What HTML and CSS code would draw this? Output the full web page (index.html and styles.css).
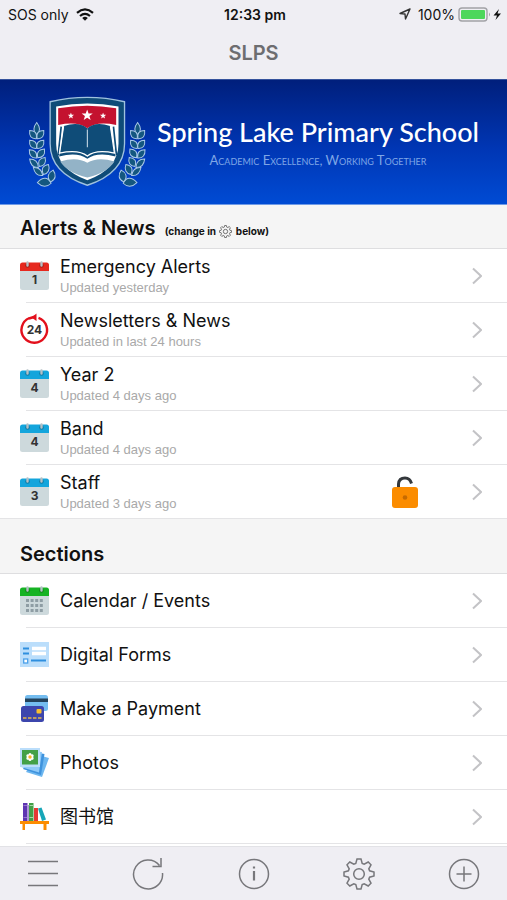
FILE: index.html
```html
<!DOCTYPE html>
<html lang="en">
<head>
  <meta charset="utf-8">
  <meta name="viewport" content="width=device-width, initial-scale=1.0">
  <title>SLPS</title>
  <link rel="stylesheet" href="styles.css">
</head>
<body>
  <!-- shared icons -->
  <svg class="defs" aria-hidden="true">
    <symbol id="cal" viewBox="0 0 29 29">
      <path d="M0 9H29V26.500Q29 29 26.500 29H2.500Q0 29 0 26.500Z" fill="#cdd9dc"/>
      <path d="M2.500 1.500H26.500Q29 1.500 29 4V10H0V4Q0 1.500 2.500 1.500Z" fill="currentColor"/>
      <circle cx="7.500" cy="4.500" r="2.300" fill="#000" opacity=".25"/>
      <circle cx="21.500" cy="4.500" r="2.300" fill="#000" opacity=".25"/>
      <path d="M7.500 1.500V4.500M21.500 1.500V4.500" stroke="#b5c0c6" stroke-width="2.400" stroke-linecap="round"/>
    </symbol>
    <symbol id="gear" viewBox="-16 -16 32 32">
      <path d="M-2 -15H2L3.200 -10.600L5.200 -9.800L9.200 -12L12 -9.200L9.800 -5.200L10.600 -3.200L15 -2V2L10.600 3.200L9.800 5.200L12 9.200L9.200 12L5.200 9.800L3.200 10.600L2 15H-2L-3.200 10.600L-5.200 9.800L-9.200 12L-12 9.200L-9.800 5.200L-10.600 3.200L-15 2V-2L-10.600 -3.200L-9.800 -5.200L-12 -9.200L-9.200 -12L-5.200 -9.800L-3.200 -10.600Z"/>
      <circle r="5.300"/>
    </symbol>
    <symbol id="chevron" viewBox="0 0 10 18">
      <path d="M1 1.500L9 9L1 16.500" fill="none" stroke="#c3c3c6" stroke-width="2"/>
    </symbol>
    <symbol id="star" viewBox="-10 -10 20 20">
      <path d="M0 -10L2.400 -3.200H9.500L3.800 1.200L5.900 8.100L0 4L-5.900 8.100L-3.800 1.200L-9.500 -3.200H-2.400Z" fill="#fff"/>
    </symbol>
    <symbol id="laurel" viewBox="85 60 90 280">
      <g fill="#14577f" stroke="#a9c8e6" stroke-width="3">
        <path d="M111 142Q94 164 111 179Q128 164 111 142Z"/>
        <path d="M110 190C113 172 105 166 90 166C88 182 94 191 110 190Z"/>
        <path d="M112 190C109 172 117 166 132 166C134 182 128 191 112 190Z"/>
        <path d="M110 219C113 201 105 195 90 195C88 211 94 220 110 219Z"/>
        <path d="M112 219C109 201 117 195 132 195C134 211 128 220 112 219Z"/>
        <path d="M111 248C113 230 104 223 89 223C88 239 95 249 111 248Z"/>
        <path d="M114 247C110 229 118 222 134 221C137 237 130 247 114 247Z"/>
        <path d="M116 276C115 258 106 251 90 251C92 267 99 277 116 276Z"/>
        <path d="M119 273C113 255 120 248 136 246C140 261 134 272 119 273Z"/>
        <path d="M129 300C126 282 116 275 101 276C104 291 112 302 129 300Z"/>
        <path d="M131 297C123 279 130 270 146 267C151 282 146 294 131 297Z"/>
        <path d="M154 323C144 304 129 304 113 321C127 335 142 335 154 323Z"/>
        <path d="M153 319C139 304 146 291 160 284C170 298 168 312 153 319Z"/>
      </g>
    </symbol>
  </svg>

  <header class="topbar">
    <div class="status">
      <div class="status-left">
        <span>SOS only</span>
        <svg width="18" height="13" viewBox="0 0 18 13" fill="none" stroke="#111" stroke-width="2.200">
          <path d="M1 4.800Q9 -2 17 4.800M4 8Q9 3.800 14 8"/>
          <path d="M6.200 9.900Q9 7.800 11.800 9.900L9 12.800Z" fill="#111" stroke="none"/>
        </svg>
      </div>
      <span class="time">12:33 pm</span>
      <div class="status-right">
        <svg width="12" height="12" viewBox="0 0 12 12" fill="none" stroke="#333" stroke-width="1.400" stroke-linejoin="round">
          <path d="M11 1L1 5.500L6 6L6.500 11Z"/>
        </svg>
        <span class="percent">100%</span>
        <svg width="44" height="15" viewBox="0 0 44 15">
          <rect x="1" y="1" width="28" height="13" rx="3" fill="#efeef3" stroke="#a2a2a6" stroke-width="1.400"/>
          <rect x="3" y="3" width="24" height="9" rx="1" fill="#4cd75b"/>
          <path d="M31 5.500Q33 7.500 31 9.500Z" fill="#a2a2a6"/>
          <path d="M41 2L35.500 8.500H39L37.500 13L43 6.500H39.500Z" fill="#111"/>
        </svg>
      </div>
    </div>
    <h1 class="title">SLPS</h1>
  </header>

  <section class="banner">
    <svg class="crest" viewBox="85 60 355 280">
      <use href="#laurel" x="85" y="60" width="90" height="280"/>
      <use href="#laurel" x="85" y="60" width="90" height="280" transform="translate(523 0) scale(-1 1)"/>
      <path d="M151 80Q262 54 373 80V205Q373 292 262 329Q151 292 151 205Z" fill="#0f4c78" stroke="#9fc2de" stroke-width="4"/>
      <path d="M169 94Q262 76 355 94V205Q355 279 262 314Q169 279 169 205Z" fill="#fff"/>
      <path d="M175 99Q262 84 348 99V149Q290 137 262 159Q234 137 175 149Z" fill="#c4122f"/>
      <path d="M181 258Q231 243 262 262Q293 243 343 258Q322 291 262 306Q202 291 181 258Z" fill="#93b3c7"/>
      <path d="M192 152Q240 138 262 160Q284 138 330 152L346 243Q291 229 262 250Q233 229 178 243Z" fill="#0f4c78"/>
      <path d="M184 154L175 240M340 154L349 240" stroke="#0f4c78" stroke-width="5"/>
      <path d="M191 153L179 233Q237 221 262 242Q287 221 343 233L331 153" fill="none" stroke="#fff" stroke-width="4"/>
      <path d="M262 163V216" stroke="#d5e4ee" stroke-width="3"/>
      <use href="#star" x="203" y="112" width="20" height="20"/>
      <use href="#star" x="244" y="103" width="35" height="35"/>
      <use href="#star" x="299" y="112" width="20" height="20"/>
    </svg>
    <div class="banner-text">
      <div class="school">Spring Lake Primary School</div>
      <div class="motto">Academic Excellence, Working Together</div>
    </div>
  </section>

  <main>
    <h2 class="heading">Alerts &amp; News
      <small>(change in <svg class="mini-gear" width="13" height="13"><use href="#gear"/></svg> below)</small>
    </h2>
    <ul class="list alerts">
      <li><a class="row" href="#">
        <svg class="icon red" viewBox="0 0 29 29"><use href="#cal"/><text x="14.500" y="23">1</text></svg>
        <span class="label">Emergency Alerts<small>Updated yesterday</small></span>
        <svg class="chevron"><use href="#chevron"/></svg>
      </a></li>
      <li><a class="row" href="#">
        <svg class="icon" viewBox="0 0 29 29">
          <path d="M18.500 2.800A12.800 12.800 0 1 1 9.500 3" fill="none" stroke="#e3101c" stroke-width="2.400"/>
          <path d="M9 3.500L15.500 1.500" stroke="#e3101c" stroke-width="2.400"/>
          <path d="M16.500 -1.500V6L11.500 2.500Z" fill="#e3101c"/>
          <text x="14.500" y="19">24</text>
        </svg>
        <span class="label">Newsletters &amp; News<small>Updated in last 24 hours</small></span>
        <svg class="chevron"><use href="#chevron"/></svg>
      </a></li>
      <li><a class="row" href="#">
        <svg class="icon blue" viewBox="0 0 29 29"><use href="#cal"/><text x="14.500" y="23">4</text></svg>
        <span class="label">Year 2<small>Updated 4 days ago</small></span>
        <svg class="chevron"><use href="#chevron"/></svg>
      </a></li>
      <li><a class="row" href="#">
        <svg class="icon blue" viewBox="0 0 29 29"><use href="#cal"/><text x="14.500" y="23">4</text></svg>
        <span class="label">Band<small>Updated 4 days ago</small></span>
        <svg class="chevron"><use href="#chevron"/></svg>
      </a></li>
      <li><a class="row" href="#">
        <svg class="icon blue" viewBox="0 0 29 29"><use href="#cal"/><text x="14.500" y="23">3</text></svg>
        <span class="label">Staff<small>Updated 3 days ago</small></span>
        <svg class="lock" width="26" height="32" viewBox="0 0 26 32">
          <path d="M6.500 13V8Q7 2 13 2Q18 2 19.500 7.500" fill="none" stroke="#34383c" stroke-width="3"/>
          <rect x="0" y="11" width="26" height="21" rx="3" fill="#fb8c00"/>
          <circle cx="13" cy="21.500" r="2.300" fill="#c66a00"/>
        </svg>
        <svg class="chevron"><use href="#chevron"/></svg>
      </a></li>
    </ul>

    <h2 class="heading sections">Sections</h2>
    <ul class="list">
      <li><a class="row" href="#">
        <svg class="icon green" viewBox="0 0 29 29">
          <use href="#cal"/>
          <path d="M6 14.500H23M6 19.500H23M6 24.500H23" stroke="#8e9da4" stroke-width="3" stroke-dasharray="3 1.600"/>
        </svg>
        <span class="label">Calendar / Events</span>
        <svg class="chevron"><use href="#chevron"/></svg>
      </a></li>
      <li><a class="row" href="#">
        <svg class="icon" viewBox="0 0 29 29">
          <rect y="2" width="29" height="25" fill="#bbdefb"/>
          <path d="M3 8.500H9M3 13.500H9M11 20.500H26" stroke="#2f8fdf" stroke-width="1.800"/>
          <path d="M12 8.500H26M12 13.500H26" stroke="#fff" stroke-width="3.400"/>
          <rect x="3.700" y="19" width="4" height="4" fill="#fff" stroke="#4aa0ea" stroke-width="1.300"/>
        </svg>
        <span class="label">Digital Forms</span>
        <svg class="chevron"><use href="#chevron"/></svg>
      </a></li>
      <li><a class="row" href="#">
        <svg class="icon" viewBox="0 0 29 29">
          <rect x="5" y="1" width="23" height="16" rx="2.500" fill="#74bdf0"/>
          <rect x="5" y="4.500" width="23" height="3.500" fill="#23435c"/>
          <rect x="1" y="12" width="23" height="16" rx="2.500" fill="#3c46ad"/>
          <rect x="16.500" y="15" width="5" height="4.500" rx="1" fill="#f9c02d"/>
          <path d="M3 24H22" stroke="#e5b84b" stroke-width="1.600" stroke-dasharray="3.500 1.500"/>
        </svg>
        <span class="label">Make a Payment</span>
        <svg class="chevron"><use href="#chevron"/></svg>
      </a></li>
      <li><a class="row" href="#">
        <svg class="icon" viewBox="0 0 29 29">
          <path d="M18 7L29 10L22 29L6 24Z" fill="#6db7f0"/>
          <path d="M14 4L24.500 6L21 27L3 21Z" fill="#3f93dd"/>
          <path d="M12 3L22 4L19 24.500L1 19Z" fill="#90caf9"/>
          <rect width="20" height="19" fill="#bbdefb"/>
          <rect x="2" y="2" width="16" height="14.500" fill="#43a047"/>
          <path d="M10 6.500V11.500M7.800 7.800L12.200 10.200M12.200 7.800L7.800 10.200" stroke="#fff" stroke-width="3" stroke-linecap="round"/>
          <circle cx="10" cy="9" r="1.700" fill="#f9b428"/>
        </svg>
        <span class="label">Photos</span>
        <svg class="chevron"><use href="#chevron"/></svg>
      </a></li>
      <li><a class="row" href="#">
        <svg class="icon" viewBox="0 0 29 29">
          <path d="M3 1H7.500V19H3Z" fill="#5e35b1"/>
          <path d="M8 3H8.800V19H8Z" fill="#9575cd"/>
          <path d="M9 1H13.500V19H9Z" fill="#43a047"/>
          <path d="M14 6H18V19H14Z" fill="#e53935"/>
          <path d="M18 6.500L21.500 5.500L26 17.500L22 19Z" fill="#17a6b8"/>
          <path d="M3.500 3.500H7M3.500 15.500H7" stroke="#9575cd" stroke-width="1.200"/>
          <path d="M9.500 3.500H13M9.500 15.500H13" stroke="#a5d6a7" stroke-width="1.200"/>
          <path d="M0 19H29V22H26.500V28H23.500V22H5V28H2.500V22H0Z" fill="#fb8c00"/>
        </svg>
        <span class="label" lang="zh">图书馆</span>
        <svg class="chevron"><use href="#chevron"/></svg>
      </a></li>
    </ul>
  </main>

  <nav class="toolbar">
    <button type="button" aria-label="Menu">
      <svg viewBox="0 0 32 32"><path d="M1 3.500H31M1 15.500H31M1 27.500H31"/></svg>
    </button>
    <button type="button" aria-label="Refresh">
      <svg viewBox="0 0 32 32"><path d="M30.500 15A14.500 14.500 0 1 1 27.500 7.500M29 0V8.500H20.500"/></svg>
    </button>
    <button type="button" aria-label="Info">
      <svg viewBox="0 0 32 32"><circle cx="16" cy="16" r="14.500"/><path d="M16 13V22.500M16 8.500V10.500" stroke-width="2.200"/></svg>
    </button>
    <button type="button" aria-label="Settings">
      <svg><use href="#gear"/></svg>
    </button>
    <button type="button" aria-label="Add">
      <svg viewBox="0 0 32 32"><circle cx="16" cy="16" r="14.500"/><path d="M16 8.500V23.500M8.500 16H23.500"/></svg>
    </button>
  </nav>
</body>
</html>
```
FILE: styles.css
```css
* {
  box-sizing: border-box;
}
body {
  margin: 0;
  min-height: 100vh;
  display: flex;
  flex-direction: column;
  background: white;
  color: #111;
  font-family: Inter, "Noto Sans CJK SC", sans-serif;
}
svg {
  display: block;
  flex: none;
}
.defs {
  position: absolute;
  width: 0;
  height: 0;
}

/* top bar */
.topbar {
  background: #efeef3;
  height: 79px;
}
.status {
  display: grid;
  grid-template-columns: 1fr auto 1fr;
  align-items: center;
  height: 28px;
  padding: 0 5px 0 8px;
  font-size: 14px;
}
.status-left,
.status-right {
  display: flex;
  align-items: center;
  gap: 7px;
}
.status-right {
  justify-content: flex-end;
}
.percent {
  margin-right: -4px;
}
.time {
  font-weight: 600;
}
.title {
  margin: 0;
  font-size: 20px;
  line-height: 50px;
  font-weight: 600;
  text-align: center;
  color: #6d6d70;
}

/* school banner */
.banner {
  display: flex;
  align-items: center;
  gap: 10px;
  height: 126px;
  padding: 0 28px;
  background: linear-gradient(#001f7c, #0036b4 55%, #004bd4);
  border-top: 1px solid #34529c;
  border-bottom: 1px solid #6f9ae6;
  white-space: nowrap;
}
.crest {
  width: 119px;
  height: 94px;
}
.banner-text {
  flex: 1;
  text-align: center;
}
.school {
  color: white;
  font: 500 27px/36px Lato, sans-serif;
}
.motto {
  color: #7fa6e6;
  font: 13px/20px Lato, sans-serif;
  font-variant: small-caps;
}

/* lists */
.heading {
  margin: 0;
  padding: 0 20px;
  height: 44px;
  background: #f5f5f5;
  border-bottom: 1px solid #dedee0;
  font-size: 20px;
  line-height: 46px;
  font-weight: 600;
}
.heading small {
  font-size: 10px;
  font-weight: 700;
  margin-left: 4px;
}
.mini-gear {
  display: inline-block;
  margin: 0 1px;
  vertical-align: -3px;
  fill: none;
  stroke: #555;
  stroke-width: 2;
}
.sections {
  height: 55px;
  padding-top: 12px;
}
.list {
  list-style: none;
  margin: 0;
  padding: 0;
}
.list li {
  margin-left: 26px;
  border-bottom: 1px solid #e4e4e6;
}
.alerts li:last-child {
  margin-left: 0;
  padding-left: 26px;
}
.row {
  display: flex;
  align-items: center;
  height: 53px;
  margin-left: -6px;
  padding-right: 25px;
  color: inherit;
  text-decoration: none;
}
.icon {
  width: 29px;
  height: 29px;
  margin-right: 11px;
  overflow: visible;
}
.icon text {
  font: 700 12px Inter, sans-serif;
  text-anchor: middle;
  fill: #333;
}
.red {
  color: #e6291f;
}
.blue {
  color: #14a5dc;
}
.green {
  color: #16b324;
}
.label {
  flex: 1;
  font-size: 18px;
  line-height: 24px;
}
.label small {
  display: block;
  color: #a9a9a9;
  font: 13px/18px "Liberation Sans", sans-serif;
}
.lock {
  margin-right: 54px;
}
.chevron {
  width: 10px;
  height: 18px;
}

/* bottom toolbar */
.toolbar {
  position: sticky;
  bottom: 0;
  display: flex;
  justify-content: space-between;
  align-items: center;
  height: 54px;
  margin-top: auto;
  padding: 0 27px;
  background: #efeef3;
  border-top: 1px solid #e2e2e6;
}
.toolbar button {
  padding: 0;
  border: none;
  background: none;
  cursor: pointer;
}
.toolbar svg {
  width: 32px;
  height: 32px;
  fill: none;
  stroke: #77777b;
  stroke-width: 1.5;
}
```
